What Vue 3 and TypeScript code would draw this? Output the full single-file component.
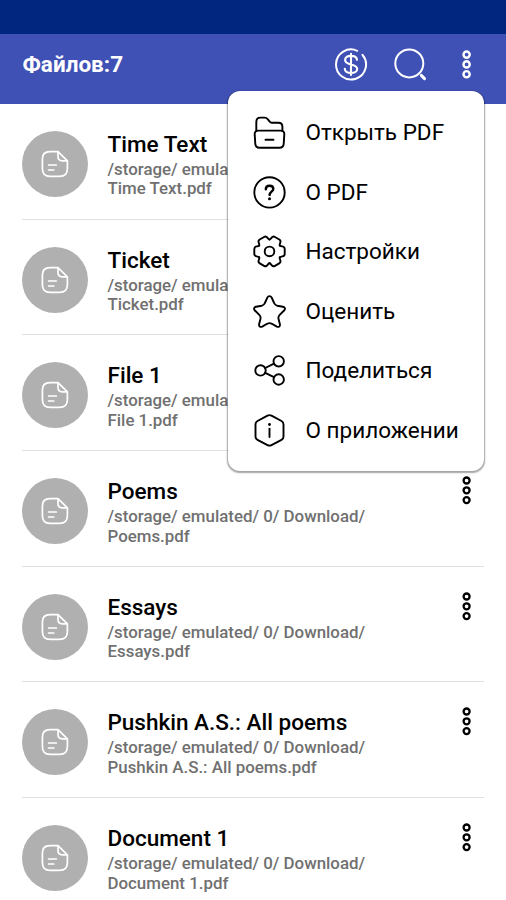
<script setup lang="ts">
interface PdfFile {
  title: string
  file: string
}

interface MenuEntry {
  icon: 'folder' | 'question' | 'gear' | 'star' | 'share' | 'info'
  label: string
}

const folder = '/storage/ emulated/ 0/ Download/'

const files: PdfFile[] = [
  { title: 'Time Text', file: 'Time Text.pdf' },
  { title: 'Ticket', file: 'Ticket.pdf' },
  { title: 'File 1', file: 'File 1.pdf' },
  { title: 'Poems', file: 'Poems.pdf' },
  { title: 'Essays', file: 'Essays.pdf' },
  { title: 'Pushkin A.S.: All poems', file: 'Pushkin A.S.: All poems.pdf' },
  { title: 'Document 1', file: 'Document 1.pdf' },
]

const menu: MenuEntry[] = [
  { icon: 'folder', label: 'Открыть PDF' },
  { icon: 'question', label: 'О PDF' },
  { icon: 'gear', label: 'Настройки' },
  { icon: 'star', label: 'Оценить' },
  { icon: 'share', label: 'Поделиться' },
  { icon: 'info', label: 'О приложении' },
]

const teeth = [0, 60, 120, 180, 240, 300]
</script>

<template>
  <div class="screen">
    <div class="status"></div>
    <header class="bar">
      <h1 class="heading">Файлов:7</h1>
      <svg class="tool" viewBox="-18 -18.4 36 36">
        <path d="M6.2 -13.6A15 15 0 1 0 11.5 -9.6" />
        <path class="dollar" d="M0 -10.5V10.5M6 -4.6C5.8 -7.1 3.6 -8.5 0 -8.5C-3.7 -8.5 -5.9 -7 -5.9 -4.5C-5.9 -1.9 -3.6 -.9 0 0C3.8 .9 6.2 2 6.2 4.6C6.2 7 3.8 8.5 0 8.5C-3.8 8.5 -6.2 7 -6.2 4.3" />
      </svg>
      <svg class="tool" viewBox="-18.3 -18.4 36 36">
        <circle cx="-1" cy="-1" r="14" />
        <path class="handle" d="M11 11L14.2 14.2" />
      </svg>
      <svg class="dots light" viewBox="-0.6 -0.4 10 30">
        <circle v-for="y in [5.2, 15, 24.8]" :key="y" cx="5" :cy="y" r="3.1" />
      </svg>
    </header>

    <ul class="list">
      <li v-for="item in files" :key="item.title" class="row">
        <div class="avatar">
          <svg class="doc" viewBox="0 0 28 28">
            <path d="M17 1.6H9C3.6 1.6 1.4 4 1.4 9V18.5C1.4 24 3.8 26.4 9 26.4H18.5C24 26.4 26.4 24 26.4 18.5V10.8L17 1.6V6.5C17 9.6 18.2 10.8 21.3 10.8H26.4" />
            <path d="M7.6 15H15.3M7.6 20H12.8" />
          </svg>
        </div>
        <div class="info">
          <div class="title">{{ item.title }}</div>
          <div class="path">{{ folder }}<br />{{ item.file }}</div>
        </div>
        <svg class="dots" viewBox="-0.6 -0.3 10 30">
          <circle v-for="y in [5.2, 15, 24.8]" :key="y" cx="5" :cy="y" r="3" />
        </svg>
      </li>
    </ul>

    <nav class="menu">
      <div v-for="entry in menu" :key="entry.icon" class="entry">
        <svg class="glyph" viewBox="-18.5 -18.4 36 36">
          <template v-if="entry.icon === 'folder'">
            <path d="M-13.2 -1.5V-10.5Q-13.2 -14.8 -9 -14.8H-4.8C-3.3 -14.8 -2.7 -14.4 -1.8 -13.2L.4 -10.5Q1.1 -9.7 2.3 -9.7H9Q12.9 -9.7 12.9 -5.7V-1.5" />
            <path d="M-11 -1.8H11Q15 -1.8 14.8 2L14.2 11.5Q13.9 15.4 10 15.4H-10Q-13.9 15.4 -14.2 11.5L-14.8 2Q-15 -1.8 -11 -1.8ZM-4 7.4H4" />
          </template>
          <template v-else-if="entry.icon === 'question'">
            <circle r="15.2" />
            <path class="query" d="M-3.7 -3.1C-3.7 -5.5 -2.2 -6.6 0 -6.6C2.3 -6.6 3.8 -5.4 3.8 -3.4C3.8 -.8 .1 -.6 .1 2.5" />
            <circle class="point" cx="0" cy="6.3" r="1.5" />
          </template>
          <template v-else-if="entry.icon === 'gear'">
            <path
              v-for="angle in teeth"
              :key="angle"
              :transform="`rotate(${angle})`"
              d="M10.3 -5.95C10.8 -5.1 11.8 -5.3 12.9 -5C14.6 -4.7 15.2 -3.9 15.2 -2.5V2.5C15.2 3.9 14.6 4.7 12.9 5C11.8 5.3 10.8 5.1 10.3 5.95"
            />
            <circle r="4.8" />
          </template>
          <path
            v-else-if="entry.icon === 'star'"
            d="M-2.2 -13.8C-1.2 -15.8 1.2 -15.8 2.2 -13.8L4.6 -8.4Q5.5 -6.2 7.8 -5.7L13.4 -4.7C15.6 -4.2 16.1 -2.3 14.6 -.9L10.2 3.5Q8.6 5.1 9 7.3L10.4 12.8C10.8 15 9.3 16 7.3 15.2L2.4 12.4Q0 11.1 -2.4 12.4L-7.3 15.2C-9.3 16 -10.8 15 -10.4 12.8L-9 7.3Q-8.6 5.1 -10.2 3.5L-14.6 -.9C-16.1 -2.3 -15.6 -4.2 -13.4 -4.7L-7.8 -5.7Q-5.5 -6.2 -4.6 -8.4Z"
          />
          <template v-else-if="entry.icon === 'share'">
            <circle cx="-9" cy="0" r="5.2" />
            <circle cx="9.2" cy="-9.1" r="5.2" />
            <circle cx="9.2" cy="9.1" r="5.2" />
            <path d="M-4.3 -2.4L4.5 -6.8M-4.3 2.4L4.5 6.8" />
          </template>
          <template v-else>
            <path d="M-2 -14.7Q0 -15.8 2 -14.7L12 -9.4Q14 -8.3 14 -6V6Q14 8.3 12 9.4L2 14.7Q0 15.8 -2 14.7L-12 9.4Q-14 8.3 -14 6V-6Q-14 -8.3 -12 -9.4Z" />
            <path d="M0 -1.8V6.6" />
            <circle class="point" cx="0" cy="-5.9" r="1.4" />
          </template>
        </svg>
        <span class="label">{{ entry.label }}</span>
      </div>
    </nav>
  </div>
</template>

<style>
body {
  margin: 0;
  background: #fff;
}
</style>

<style scoped>
.screen {
  position: relative;
  width: 506px;
  height: 900px;
  overflow: hidden;
  background: #fff;
  font-family: Roboto, "Noto Sans", sans-serif;
  color: #000;
}

svg {
  flex: none;
  fill: none;
  stroke: currentColor;
  stroke-width: 2;
  stroke-linecap: round;
  stroke-linejoin: round;
}

.status {
  height: 34px;
  background: #00267f;
}

.bar {
  box-sizing: border-box;
  height: 69.5px;
  display: flex;
  align-items: center;
  padding: 0 35px 9px 22.5px;
  background: #3f51b5;
  color: #fff;
}

.heading {
  flex: 1;
  margin: 0;
  font-size: 22.5px;
  font-weight: 700;
  line-height: 30px;
}

.tool {
  width: 36px;
  height: 36px;
  margin-right: 23px;
}

.tool + .dots {
  margin-left: 10px;
}

.dollar {
  stroke-width: 2.1;
}

.handle {
  stroke-width: 3;
}

.dots {
  width: 10px;
  height: 30px;
  stroke-width: 2.3;
}

.light {
  stroke-width: 2.4;
}

.list {
  margin: 0;
  padding: 0.5px 22px 0;
  list-style: none;
}

.row {
  box-sizing: border-box;
  height: 115.7px;
  display: flex;
  align-items: flex-start;
  padding: 23.9px 13px 0 0;
  border-bottom: 1px solid #e0e0e0;
}

.avatar {
  width: 66px;
  height: 66px;
  flex: none;
  display: flex;
  align-items: center;
  justify-content: center;
  margin-top: 3.1px;
  border-radius: 50%;
  background: #b0b0b0;
  color: #fff;
}

.doc {
  width: 28px;
  height: 28px;
  stroke-width: 1.7;
}

.info {
  flex: 1;
  padding-left: 19.5px;
  white-space: nowrap;
}

.title {
  font-size: 22.5px;
  font-weight: 500;
  line-height: 32px;
}

.path {
  color: #707070;
  font-size: 16.87px;
  font-weight: 500;
  line-height: 19.6px;
}

.menu {
  position: absolute;
  top: 91.3px;
  left: 227.7px;
  box-sizing: border-box;
  width: 256px;
  height: 380px;
  padding: 11.2px 0 0 23.8px;
  border-radius: 12px;
  background: #fff;
  box-shadow: 0 1.2px 1.5px 0.5px rgba(0, 0, 0, 0.36);
}

.entry {
  height: 59.55px;
  display: flex;
  align-items: center;
}

.glyph {
  width: 36px;
  height: 36px;
  stroke-width: 1.9;
}

.query {
  stroke-width: 2.4;
}

.point {
  fill: currentColor;
  stroke: none;
}

.label {
  padding-left: 18px;
  font-size: 22.5px;
  line-height: 30px;
  white-space: nowrap;
}
</style>
